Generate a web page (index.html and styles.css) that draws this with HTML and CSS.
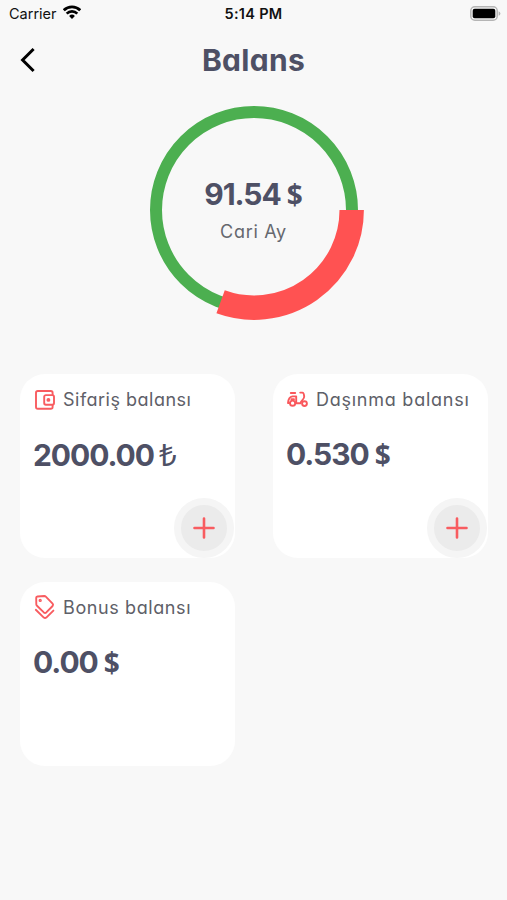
FILE: index.html
```html
<!DOCTYPE html>
<html lang="az">
<head>
    <meta charset="UTF-8">
    <meta name="viewport" content="width=device-width, initial-scale=1.0">
    <title>Balans</title>
    <link rel="stylesheet" href="styles.css">
</head>
<body>
    <div class="status-bar">
        <div class="carrier">
            <span>Carrier</span>
            <svg width="18" height="14" viewBox="0 0 18 14" fill="none" stroke="#000" stroke-width="2.7">
                <path d="M0.8 5.2a11.6 11.6 0 0 1 16.4 0"/>
                <path d="M3.7 8.6a7.5 7.5 0 0 1 10.6 0"/>
                <path d="M9 13.9L6.1 11a4.1 4.1 0 0 1 5.8 0z" fill="#000" stroke="none"/>
            </svg>
        </div>
        <span class="time">5:14 PM</span>
        <svg class="battery" width="31" height="15" viewBox="0 0 31 15">
            <rect x="0.8" y="0.8" width="26.4" height="13.4" rx="4" fill="#f8f8f8" stroke="#b5b5b5" stroke-width="1.5"/>
            <rect x="2.7" y="2.7" width="22.6" height="9.6" rx="2" fill="#000"/>
            <path d="M28.6 5.2v4.6q1.8-.7 1.8-2.3t-1.8-2.3z" fill="#b5b5b5"/>
        </svg>
    </div>

    <header class="header">
        <a href="#" class="back-btn" aria-label="Geri">
            <svg width="16" height="26" viewBox="0 0 16 26" fill="none" stroke="#000" stroke-width="3">
                <path d="M13.6 2L2.6 13L13.6 24"/>
            </svg>
        </a>
        <h1>Balans</h1>
    </header>

    <section class="chart">
        <svg class="ring" width="220" height="220" viewBox="-110 -110 220 220" fill="none">
            <circle r="98" stroke="#4caf50" stroke-width="12"/>
            <path d="M97.7 0A97.7 97.7 0 0 1 -33.4 91.8" stroke="#ff5252" stroke-width="24.4"/>
        </svg>
        <div class="chart-label">
            <p class="amount">91.54<span class="currency">$</span></p>
            <p class="month">Cari Ay</p>
        </div>
    </section>

    <main class="cards">
        <div class="card">
            <div class="card-title">
                <svg width="22" height="22" viewBox="0 0 22 22" fill="none" stroke="#f85c60" stroke-width="1.9" stroke-linejoin="round">
                    <path d="M19.6 7V4.8Q19.6 3 17.8 3H4.8Q3 3 3 4.8V18.9Q3 20.7 4.8 20.7H17.8Q19.6 20.7 19.6 18.9V16.7"/>
                    <rect x="11.2" y="7.1" width="9.8" height="9.6" rx="1.7"/>
                    <circle cx="15.4" cy="11.9" r="1"/>
                </svg>
                <span class="name">Sifariş balansı</span>
            </div>
            <p class="amount">2000.00<span class="currency lira">₺</span></p>
            <button class="add-btn" aria-label="Artır">
                <svg width="22" height="22" viewBox="0 0 22 22" stroke="#f85c60" stroke-width="2.6" stroke-linecap="round">
                    <path d="M11 1.5V20.5M1.5 11H20.5"/>
                </svg>
            </button>
        </div>

        <div class="card">
            <div class="card-title">
                <svg width="22" height="22" viewBox="0 0 22 22" fill="none" stroke="#f9585c" stroke-width="1.9" stroke-linecap="round" stroke-linejoin="round">
                    <path d="M4.8 5H9.2M10.2 8.4V15.2H14.6C14.9 12.2 18.4 11.8 18.2 8.4Q17.9 4.6 16.4 4.6H14.2M10.2 8.4H6.5Q2.4 9 2 15H3.4"/>
                    <circle cx="6.6" cy="15.2" r="2.6"/>
                    <circle cx="18.5" cy="15.6" r="2.4"/>
                    <path d="M5.4 11.2H8"/>
                </svg>
                <span class="name shipping">Daşınma balansı</span>
            </div>
            <p class="amount">0.530<span class="currency">$</span></p>
            <button class="add-btn" aria-label="Artır">
                <svg width="22" height="22" viewBox="0 0 22 22" stroke="#f85c60" stroke-width="2.6" stroke-linecap="round">
                    <path d="M11 1.5V20.5M1.5 11H20.5"/>
                </svg>
            </button>
        </div>

        <div class="card">
            <div class="card-title">
                <svg width="22" height="26" viewBox="0 0 22 26" fill="none" stroke="#f85c60" stroke-width="1.9" stroke-linecap="round" stroke-linejoin="round">
                    <path d="M3.2 3.8Q3.2 2.6 4.4 2.5L11.4 2Q12.2 2 12.8 2.6L19.6 9.6Q20.6 10.8 19.6 12L13.3 18.4Q12 19.4 10.8 18.4L4 11.8Q3.3 11.2 3.3 10.2Z"/>
                    <path d="M2.8 15.8L10.8 23.6Q12 24.6 13.3 23.6L20.4 16.6"/>
                    <circle cx="7.2" cy="6.4" r=".7"/>
                </svg>
                <span class="name bonus">Bonus balansı</span>
            </div>
            <p class="amount">0.00<span class="currency">$</span></p>
        </div>
    </main>
</body>
</html>
```

FILE: styles.css
```css
* {
    margin: 0;
    padding: 0;
    box-sizing: border-box;
}

body {
    background: #f8f8f8;
    min-height: 100vh;
    color: #4e5065;
    font-family: 'Inter', sans-serif;
    font-feature-settings: 'cv11';
}

.status-bar {
    display: grid;
    grid-template-columns: 1fr auto 1fr;
    align-items: center;
    height: 28px;
    padding: 0 6px 2px 9px;
    color: #111;
    font-size: 14.5px;
    font-feature-settings: normal;
}

.carrier {
    display: flex;
    align-items: center;
    gap: 6px;
}

.carrier svg {
    margin-bottom: 2px;
}

.time {
    margin-right: 3px;
    font-weight: 600;
    letter-spacing: 0.3px;
}

.battery {
    justify-self: end;
}

.header {
    display: grid;
    grid-template-columns: 1fr auto 1fr;
    align-items: center;
    height: 64px;
    padding: 0 20px;
}

.back-btn svg {
    display: block;
}

h1 {
    font-size: 30px;
    font-weight: 700;
    line-height: 1;
    letter-spacing: 0.3px;
}

.chart {
    display: grid;
    place-items: center;
    margin-top: 8px;
}

.ring,
.chart-label {
    grid-area: 1 / 1;
}

.chart-label {
    padding-bottom: 4px;
    text-align: center;
}

.amount {
    display: flex;
    align-items: baseline;
    font-size: 30px;
    font-weight: 700;
    line-height: 40px;
    letter-spacing: -1.05px;
}

.currency {
    margin-left: 6px;
    font-family: 'Noto Sans', sans-serif;
    font-size: 28px;
    letter-spacing: 0;
}

.lira {
    margin-left: 5px;
    font-size: 31px;
    font-weight: 400;
}

.month {
    margin-top: 7px;
    font-size: 18px;
    line-height: 22px;
    letter-spacing: 0.7px;
    color: #66686f;
}

.cards {
    display: grid;
    grid-template-columns: 1fr 1fr;
    gap: 24px 38px;
    margin-top: 54px;
    padding: 0 19px 0 20px;
}

.card {
    position: relative;
    height: 184px;
    padding: 11px 13px;
    background: #fff;
    border-radius: 25px;
}

.card-title {
    display: flex;
    align-items: center;
    gap: 8px;
    height: 28px;
    font-size: 18px;
    color: #5e6068;
    white-space: nowrap;
}

.name {
    letter-spacing: 0.5px;
}

.shipping {
    letter-spacing: 0.75px;
}

.bonus {
    letter-spacing: 0.6px;
}

.card .amount {
    margin-top: 21px;
}

.add-btn {
    position: absolute;
    right: 1px;
    bottom: 0;
    display: grid;
    place-items: center;
    width: 60px;
    height: 60px;
    border: 7px solid #f5f5f5;
    border-radius: 50%;
    background: #ebebeb;
    cursor: pointer;
}
```
